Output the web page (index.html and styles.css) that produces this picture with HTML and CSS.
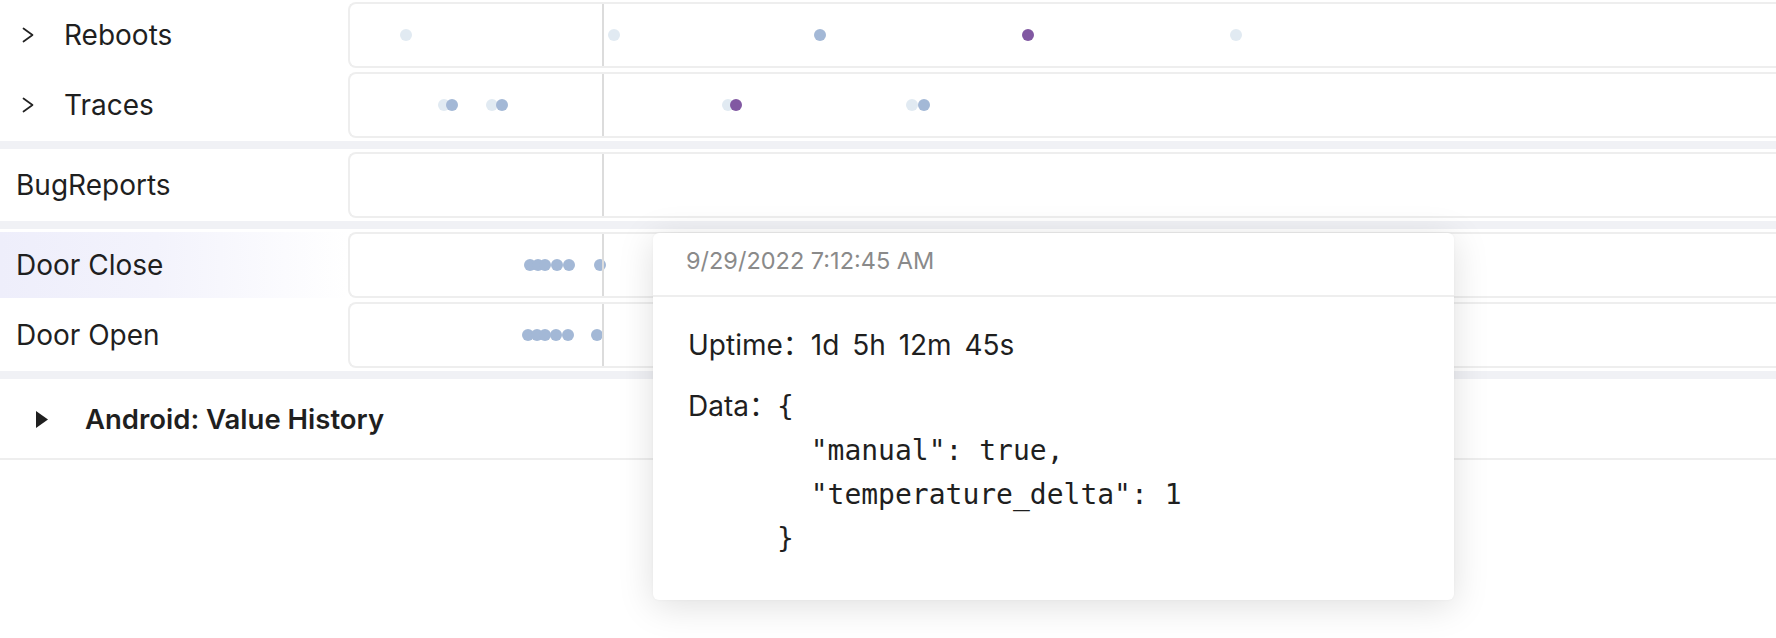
FILE: index.html
```html
<!DOCTYPE html>
<html>
<head>
<meta charset="utf-8">
<link rel="stylesheet" href="styles.css">
</head>
<body>
<div class="page">
  <div class="row">
    <div class="label"><svg class="chev" viewBox="0 0 12 16"><polyline points="1.5,1.5 10.5,8 1.5,14.5"/></svg><span>Reboots</span></div>
    <div class="track">
      <span class="dot light" style="left:50px"></span>
      <span class="dot light" style="left:258px"></span>
      <span class="dot mid" style="left:464px"></span>
      <span class="dot purple" style="left:672px"></span>
      <span class="dot light" style="left:880px"></span>
      <span class="cursor"></span>
    </div>
  </div>
  <div class="row">
    <div class="label"><svg class="chev" viewBox="0 0 12 16"><polyline points="1.5,1.5 10.5,8 1.5,14.5"/></svg><span>Traces</span></div>
    <div class="track">
      <span class="dot light" style="left:88px"></span>
      <span class="dot mid" style="left:96px"></span>
      <span class="dot light" style="left:136px"></span>
      <span class="dot mid" style="left:146px"></span>
      <span class="dot light" style="left:372px"></span>
      <span class="dot purple" style="left:380px"></span>
      <span class="dot light" style="left:556px"></span>
      <span class="dot mid" style="left:568px"></span>
      <span class="cursor"></span>
    </div>
  </div>
  <div class="sep"></div>
  <div class="row">
    <div class="label plain"><span>BugReports</span></div>
    <div class="track">
      <span class="cursor"></span>
    </div>
  </div>
  <div class="sep"></div>
  <div class="row">
    <div class="label plain active"><span>Door Close</span></div>
    <div class="track">
      <span class="dot mid" style="left:174px"></span>
      <span class="dot mid" style="left:182px"></span>
      <span class="dot mid" style="left:189px"></span>
      <span class="dot mid" style="left:201px"></span>
      <span class="dot mid" style="left:213px"></span>
      <span class="dot mid" style="left:244px"></span>
      <span class="cursor"></span>
    </div>
  </div>
  <div class="row">
    <div class="label plain"><span>Door Open</span></div>
    <div class="track">
      <span class="dot mid" style="left:172px"></span>
      <span class="dot mid" style="left:181px"></span>
      <span class="dot mid" style="left:189px"></span>
      <span class="dot mid" style="left:200px"></span>
      <span class="dot mid" style="left:212px"></span>
      <span class="dot mid" style="left:241px"></span>
      <span class="cursor"></span>
    </div>
  </div>
  <div class="sep"></div>
  <div class="section">
    <svg class="tri" viewBox="0 0 12 17"><polygon points="0,0 12,8.5 0,17"/></svg>
    <span>Android: Value History</span>
  </div>

  <div class="tooltip">
    <div class="tip-head">9/29/2022 7:12:45 AM</div>
    <div class="tip-body">
      <div class="tip-line">Uptime：<span class="val">1d 5h 12m 45s</span></div>
      <div class="tip-data">
        <span class="data-label">Data：</span>
        <pre class="json">{
  "manual": true,
  "temperature_delta": 1
}</pre>
      </div>
    </div>
  </div>
</div>
</body>
</html>
```
FILE: styles.css
```css
* { box-sizing: border-box; }
html, body {
  margin: 0;
  padding: 0;
  background: #ffffff;
  overflow: hidden;
}
body {
  font-family: "Inter", "Noto Sans CJK SC", sans-serif;
  color: #1f1f1f;
  width: 1776px;
  height: 638px;
}
.page {
  position: relative;
  width: 1776px;
  height: 638px;
  overflow: hidden;
}
.row {
  display: grid;
  grid-template-columns: 348px 1fr;
  height: 70px;
}
.label {
  display: flex;
  align-items: center;
  padding-left: 22px;
  font-size: 28px;
  margin: 2px 0;
}
.label.plain { padding-left: 16px; }
.label.active {
  background: linear-gradient(90deg, #eeeefb 0%, #f3f3fc 45%, #ffffff 100%);
}
.chev {
  width: 12px;
  height: 16px;
  margin-right: 30px;
  fill: none;
  stroke: #222;
  stroke-width: 1.7;
  stroke-linecap: round;
  stroke-linejoin: round;
  flex: none;
}
.track {
  position: relative;
  margin: 2px -24px 2px 0;
  border: 2px solid #eeeeee;
  border-right: none;
  border-radius: 8px 0 0 8px;
  background: #fff;
}
.dot {
  position: absolute;
  top: 25px;
  width: 12px;
  height: 12px;
  border-radius: 50%;
}
.dot.light { background: #e1eaf2; }
.dot.mid { background: #a3b8d6; }
.dot.purple { background: #8158a2; }
.cursor {
  position: absolute;
  top: 0;
  bottom: 0;
  left: 252px;
  width: 2px;
  background: #dcdcdc;
}
.sep {
  height: 8px;
  margin: 1px 0;
  background: #f0f1f5;
}
.section {
  display: flex;
  align-items: center;
  height: 80px;
  padding-left: 36px;
  border-bottom: 2px solid #eeeeee;
  font-size: 27.5px;
  font-weight: 600;
}
.tri {
  width: 12px;
  height: 17px;
  margin-right: 37px;
  fill: #1f1f1f;
  flex: none;
}
.tooltip {
  position: absolute;
  left: 653px;
  top: 233px;
  width: 801px;
  height: 367px;
  background: #ffffff;
  border-radius: 6px;
  box-shadow: 0 6px 36px rgba(0, 0, 0, 0.13), 0 0 3px rgba(0, 0, 0, 0.04);
}
.tip-head {
  height: 64px;
  padding: 13px 33px 0;
  line-height: 30px;
  font-size: 23.5px;
  color: #8a8a8a;
  border-bottom: 2px solid #eeeeee;
}
.tip-body {
  padding: 30px 35px 0;
  font-size: 28px;
}
.tip-line {
  line-height: 36px;
}
.val {
  word-spacing: 5px;
}
.tip-data {
  display: flex;
  align-items: baseline;
  margin-top: 22px;
}
.data-label {
  line-height: 36px;
}
.json {
  margin: 0;
  font-family: "DejaVu Sans Mono", "Liberation Mono", monospace;
  font-size: 28px;
  line-height: 44px;
  color: #1f1f1f;
}
```
